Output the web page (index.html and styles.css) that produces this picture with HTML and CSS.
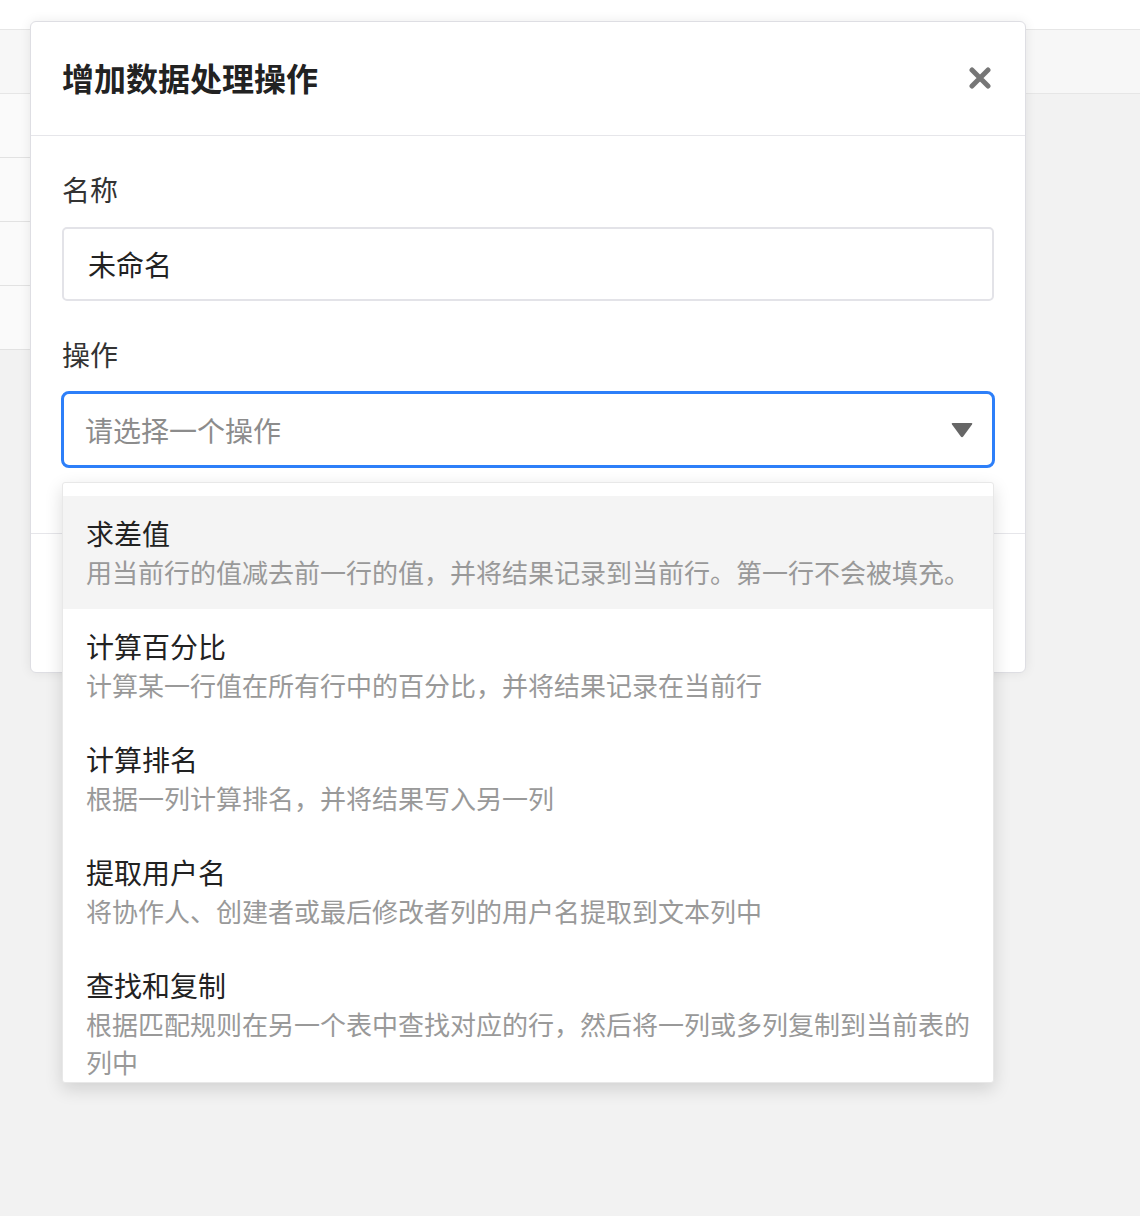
FILE: index.html
```html
<!DOCTYPE html>
<html>

<head>
  <meta charset="utf-8">
  <title>增加数据处理操作</title>
  <link rel="stylesheet" href="styles.css">
</head>

<body>
  <div class="page">
    <div class="topbar"></div>
    <div class="sheet-header"></div>
    <div class="sheet-rows">
      <div class="sheet-row"></div>
      <div class="sheet-row"></div>
      <div class="sheet-row"></div>
      <div class="sheet-row"></div>
    </div>
  </div>

  <div class="modal">
    <div class="modal-header">
      <h1>增加数据处理操作</h1>
      <button class="close-btn" aria-label="关闭">
        <svg width="22" height="22" viewBox="0 0 22 22">
          <path d="M3 3 L19 19 M19 3 L3 19" stroke="#767676" stroke-width="5" stroke-linecap="round" fill="none" />
        </svg>
      </button>
    </div>

    <div class="modal-body">
      <div class="field-label">名称</div>
      <div class="text-input">未命名</div>

      <div class="field-label">操作</div>
      <div class="select-wrap">
        <div class="select">
          <span class="placeholder">请选择一个操作</span>
          <svg class="caret" width="22" height="16" viewBox="0 0 22 16">
            <path d="M1.5 1 H20.5 Q22 1 21 2.5 L12.2 14.6 Q11 16 9.8 14.6 L1 2.5 Q0 1 1.5 1 Z" fill="#666666" />
          </svg>
        </div>

        <div class="dropdown">
          <div class="option active">
            <div class="option-title">求差值</div>
            <div class="option-desc">用当前行的值减去前一行的值，并将结果记录到当前行。第一行不会被填充。</div>
          </div>
          <div class="option">
            <div class="option-title">计算百分比</div>
            <div class="option-desc">计算某一行值在所有行中的百分比，并将结果记录在当前行</div>
          </div>
          <div class="option">
            <div class="option-title">计算排名</div>
            <div class="option-desc">根据一列计算排名，并将结果写入另一列</div>
          </div>
          <div class="option">
            <div class="option-title">提取用户名</div>
            <div class="option-desc">将协作人、创建者或最后修改者列的用户名提取到文本列中</div>
          </div>
          <div class="option">
            <div class="option-title">查找和复制</div>
            <div class="option-desc">根据匹配规则在另一个表中查找对应的行，然后将一列或多列复制到当前表的列中</div>
          </div>
        </div>
      </div>
    </div>

    <div class="modal-footer"></div>
  </div>
</body>

</html>
```

FILE: styles.css
```css
* {
  box-sizing: border-box;
  margin: 0;
  padding: 0;
}

body {
  font-family: 'Noto Sans CJK SC', 'Noto Sans', sans-serif;
  background-color: #f2f2f2;
  min-height: 100vh;
  color: #222222;
}

/* background sheet behind the dialog */
.page {
  width: 100%;
}

.topbar {
  height: 30px;
  background-color: #ffffff;
  border-bottom: 1px solid #e6e6e6;
}

.sheet-header {
  height: 64px;
  background-color: #f7f7f7;
  border-bottom: 1px solid #e6e6e6;
}

.sheet-rows {
  width: 320px;
}

.sheet-row {
  height: 64px;
  background-color: #fafafa;
  border-bottom: 1px solid #e2e2e2;
}

/* dialog */
.modal {
  position: absolute;
  top: 21px;
  left: 30px;
  width: 996px;
  background-color: #ffffff;
  border: 1px solid #dedee3;
  border-radius: 6px;
  box-shadow: 0 0 12px rgba(0, 0, 0, 0.08);
}

.modal-header {
  height: 114px;
  padding: 0 31px;
  display: flex;
  align-items: center;
  justify-content: space-between;
  border-bottom: 1px solid #e6e6ea;
}

.modal-header h1 {
  font-size: 32px;
  font-weight: 700;
  color: #222222;
  line-height: 44px;
  margin-top: -3px;
}

.close-btn {
  background: none;
  border: none;
  width: 22px;
  height: 22px;
  margin-right: 3px;
  margin-top: -1px;
  cursor: pointer;
}

.close-btn svg {
  display: block;
}

.modal-body {
  padding: 32px 31px 65px;
}

.field-label {
  font-size: 28px;
  line-height: 42px;
  color: #333333;
  margin-bottom: 17px;
}

.text-input {
  height: 74px;
  border: 2px solid #e3e3e8;
  border-radius: 5px;
  padding: 0 24px;
  font-size: 28px;
  line-height: 70px;
  color: #222222;
  margin-bottom: 32px;
}

.select-wrap {
  position: relative;
}

.select {
  margin: -1px -1px 0;
  height: 77px;
  border: 3px solid #2d7ff9;
  border-radius: 8px;
  padding: 0 19px 0 21px;
  display: flex;
  align-items: center;
  justify-content: space-between;
}

.placeholder {
  font-size: 28px;
  color: #8c8c8c;
}

.caret {
  display: block;
  margin-top: 1px;
}

.dropdown {
  position: absolute;
  top: 91px;
  left: 0;
  right: 0;
  height: 601px;
  padding-top: 13px;
  overflow: hidden;
  background-color: #ffffff;
  border: 1px solid #e8e8e8;
  border-radius: 3px;
  box-shadow: 0 6px 18px rgba(0, 0, 0, 0.14);
  z-index: 10;
}

.option {
  padding: 17px 16px 18px 23px;
}

.option.active {
  background-color: #f4f4f4;
}

.option-title {
  font-size: 28px;
  line-height: 40px;
  color: #222222;
}

.option-desc {
  font-size: 26px;
  line-height: 38px;
  color: #999999;
}

.modal-footer {
  height: 139px;
  border-top: 1px solid #e6e6ea;
}
```
